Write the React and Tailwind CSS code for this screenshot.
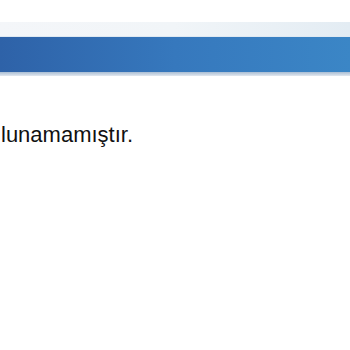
import React from 'react';

export default function App() {
  return (
    <div className="w-[350px] h-[350px] bg-white overflow-hidden" style={{ fontFamily: '"Liberation Sans", Arial, sans-serif' }}>
      <div className="h-[22px] bg-white" />
      <div className="h-[15px] bg-gradient-to-r from-[#f4f6f9] via-[#f1f5f8] to-[#e3ecf3] border-b border-[#dfe9f2]" />
      <div className="h-[35px] bg-gradient-to-r from-[#2e62a8] via-[#3678bd] to-[#3b86c6]" />
      <div className="h-[4px] bg-gradient-to-b from-[#a9bdd3] to-[#e2e8ef]" />
      <p className="mt-[47px] text-[22px] leading-[24px] text-[#111] whitespace-nowrap pl-[1px]">lunamamıştır.</p>
    </div>
  );
}
